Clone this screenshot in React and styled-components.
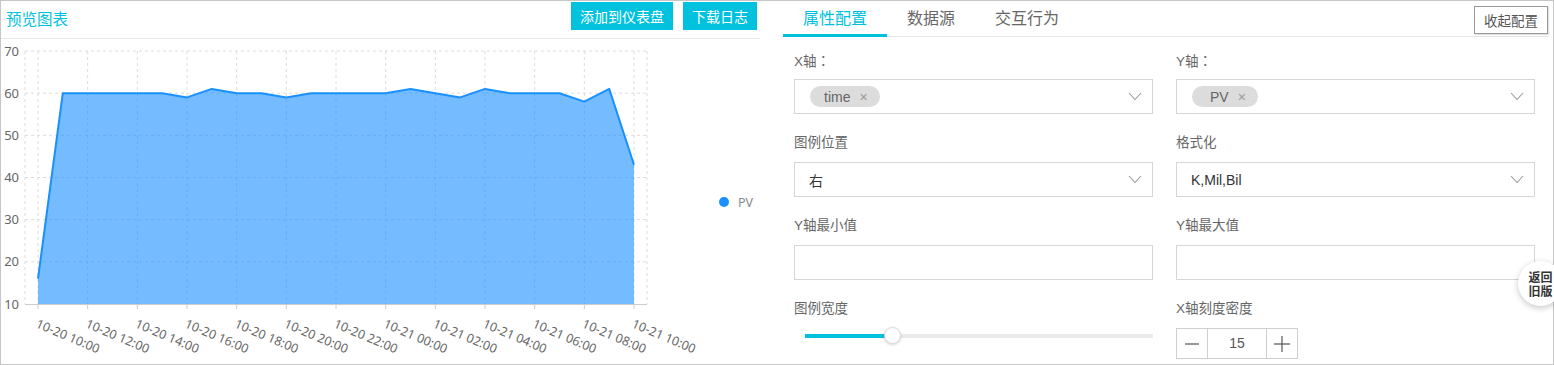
import React from 'react';
import styled, { createGlobalStyle } from 'styled-components';

const CYAN = '#00c1de';
const BLUE = '#1890ff';

const GlobalStyle = createGlobalStyle`
  html, body {
    margin: 0;
    padding: 0;
    overflow: hidden;
    background: #fff;
  }
  body {
    font-family: "Liberation Sans", "Noto Sans CJK SC", sans-serif;
  }
  * {
    box-sizing: border-box;
  }
`;

const Frame = styled.div`
  position: relative;
  display: flex;
  width: 1554px;
  height: 365px;
  border: 1px solid #c6c6c6;
`;

/* ---------- left: chart preview ---------- */

const ChartPanel = styled.section`
  display: flex;
  flex-direction: column;
  flex-shrink: 0;
  width: 759px;
`;

const ChartHeader = styled.header`
  display: flex;
  align-items: flex-start;
  gap: 10px;
  height: 38px;
  padding: 1px 3px 0 5px;
  border-bottom: 1px solid #e6e6e6;
`;

const Title = styled.h2`
  margin: 0 auto 0 0;
  font-family: "Noto Sans CJK SC", sans-serif;
  font-size: 15.5px;
  font-weight: 400;
  line-height: 32px;
  color: ${CYAN};
`;

const HeadButton = styled.button`
  height: 28px;
  padding: 0 9px;
  border: none;
  background: ${CYAN};
  color: #fff;
  font-family: "Noto Sans CJK SC", sans-serif;
  font-size: 14px;
  cursor: pointer;
`;

const ChartSvg = styled.svg`
  display: block;
  font-family: "Noto Sans", "Liberation Sans", sans-serif;

  text {
    fill: #666;
    font-size: 12.5px;
  }
`;

/* ---------- right: config ---------- */

const ConfigPanel = styled.section`
  display: flex;
  flex-direction: column;
  flex: 1;
  min-width: 0;
  margin-left: 10px;
`;

const TabBar = styled.nav`
  display: flex;
  align-items: flex-end;
  height: 36px;
  margin: 0 5px 0 13px;
  border-bottom: 1px solid #e6e6e6;
`;

const Tab = styled.div`
  height: 36px;
  margin-bottom: -1px;
  padding: 0 20px;
  font-family: "Noto Sans CJK SC", sans-serif;
  font-size: 16px;
  line-height: 33px;
  color: ${p => (p.$active ? CYAN : '#666')};
  border-bottom: 3px solid ${p => (p.$active ? CYAN : 'transparent')};
  cursor: pointer;
`;

const CollapseButton = styled.button`
  align-self: flex-start;
  height: 28px;
  margin: 5px 0 0 auto;
  padding: 0 9px;
  border: 1px solid #9a9a9a;
  background: #fff;
  box-shadow: 1px 1px 1px rgba(0, 0, 0, 0.12);
  color: #555;
  font-family: "Noto Sans CJK SC", sans-serif;
  font-size: 13.5px;
`;

const Form = styled.div`
  display: grid;
  grid-template-columns: 359px 359px;
  column-gap: 23px;
  row-gap: 19px;
  padding: 13px 0 0 24px;
`;

const Field = styled.div`
  display: flex;
  flex-direction: column;
`;

const Label = styled.div`
  height: 20px;
  margin-bottom: 9px;
  font-family: "Liberation Sans", "Noto Sans CJK SC", sans-serif;
  font-size: 13.5px;
  line-height: 20px;
  color: #666;
`;

// full-width colon drawn centred in its cell, as in the original UI font
const Colon = styled.span`
  font-family: "Noto Sans CJK TC", sans-serif;
`;

const SelectBox = styled.div`
  display: flex;
  align-items: center;
  height: 35px;
  padding: 0 10px 0 ${p => (p.$tags ? 15 : 14)}px;
  border: 1px solid #d6d6d6;
  background: #fff;
  color: #333;
  font-size: 14px;
`;

const Caret = styled.svg`
  margin-left: auto;
  flex-shrink: 0;
`;

const Tag = styled.span`
  display: inline-flex;
  align-items: center;
  gap: 9px;
  height: 21px;
  padding: 0 12px 0 ${p => p.$pad || 14}px;
  border-radius: 11px;
  background: #dcdcdc;
  color: #666;
  font-size: 14px;
`;

const TagClose = styled.span`
  color: #999;
  font-size: 14px;
  line-height: 1;
`;

const TextInput = styled.input`
  height: 35px;
  padding: 0 14px;
  border: 1px solid #d6d6d6;
  outline: none;
  font-size: 14px;
`;

const Slider = styled.div`
  position: relative;
  height: 16px;
  margin-left: 11px;
`;

const Track = styled.div`
  height: 4px;
  margin-top: 6px;
  background: #ebebeb;
`;

const TrackFill = styled.div`
  height: 100%;
  background: ${CYAN};
`;

const Thumb = styled.div`
  position: absolute;
  top: -1px;
  width: 17px;
  height: 17px;
  margin-left: -8px;
  border: 1px solid #dcdcdc;
  border-radius: 50%;
  background: #fff;
  box-shadow: 0 1px 3px rgba(0, 0, 0, 0.18);
`;

const Stepper = styled.div`
  display: flex;
  width: 122px;
  height: 31px;
  border: 1px solid #cfcfcf;
`;

const StepButton = styled.button`
  display: flex;
  align-items: center;
  justify-content: center;
  width: 30px;
  padding: 0;
  border: none;
  background: #fff;
`;

const StepValue = styled.div`
  flex: 1;
  border-left: 1px solid #cfcfcf;
  border-right: 1px solid #cfcfcf;
  color: #555;
  font-size: 14px;
  line-height: 29px;
  text-align: center;
`;

const BackBadge = styled.div`
  position: absolute;
  left: 1517px;
  top: 260px;
  display: flex;
  flex-direction: column;
  align-items: center;
  justify-content: center;
  width: 45px;
  height: 45px;
  border-radius: 50%;
  background: #fff;
  box-shadow: 0 2px 6px rgba(0, 0, 0, 0.22);
  color: #333;
  font-family: "Noto Sans CJK SC", sans-serif;
  font-size: 12px;
  font-weight: 700;
  line-height: 14px;
`;

/* ---------- chart data ---------- */

const values = [16, 60, 60, 60, 60, 60, 59, 61, 60, 60, 59, 60, 60, 60, 60, 61, 60, 59, 61, 60, 60, 60, 58, 61, 43];
const X0 = 38;
const X1 = 634;
const LEFT = 25;
const RIGHT = 647;
const Y10 = 304;
const Y70 = 51;
const px = i => X0 + (i * (X1 - X0)) / (values.length - 1);
const py = v => Y10 - ((v - 10) * (Y10 - Y70)) / 60;

const hours = ['10:00', '12:00', '14:00', '16:00', '18:00', '20:00', '22:00', '00:00', '02:00', '04:00', '06:00', '08:00', '10:00'];
const xLabels = hours.map((h, i) => `10-${i < 7 ? 20 : 21} ${h}`);

const PreviewChart = () => {
  const line = values.map((v, i) => `${i ? 'L' : 'M'}${px(i).toFixed(1)},${py(v).toFixed(1)}`).join(' ');
  const area = `${line} L${X1},${Y10} L${X0},${Y10} Z`;
  const ticks = xLabels.map((_, i) => px(i * 2));

  return (
    <ChartSvg width="759" height="325" viewBox="1 39 759 325">
      {[20, 30, 40, 50, 60, 70].map(v => (
        <line key={v} x1={LEFT} x2={RIGHT} y1={py(v)} y2={py(v)} stroke="#dcdcdc" strokeDasharray="3 3" />
      ))}
      {[LEFT, ...ticks, RIGHT].map((x, i) => (
        <line key={i} x1={x} x2={x} y1={Y70} y2={Y10} stroke="#dcdcdc" strokeDasharray="3 3" />
      ))}
      <path d={area} fill={BLUE} fillOpacity="0.6" />
      <path d={line} fill="none" stroke={BLUE} strokeWidth="2" strokeLinejoin="round" />
      <line x1={LEFT} x2={RIGHT} y1={Y10 + 0.5} y2={Y10 + 0.5} stroke="#cccccc" />
      {ticks.map((x, i) => (
        <line key={i} x1={x} x2={x} y1={Y10} y2={Y10 + 5} stroke="#cccccc" />
      ))}
      {[10, 20, 30, 40, 50, 60, 70].map(v => (
        <text key={v} x="19" y={py(v) + 4.5} textAnchor="end" style={{ fontSize: 13 }}>
          {v}
        </text>
      ))}
      {xLabels.map((label, i) => (
        <text key={i} transform={`translate(${ticks[i] - 3}, 327) rotate(23)`}>
          {label}
        </text>
      ))}
      <circle cx="724" cy="202" r="5" fill={BLUE} />
      <text x="738" y="207" style={{ fill: '#888' }}>PV</text>
    </ChartSvg>
  );
};

const ChevronDown = () => (
  <Caret width="14" height="9" viewBox="0 0 14 9">
    <polyline points="1,1 7,7.5 13,1" fill="none" stroke="#999" strokeWidth="1.1" />
  </Caret>
);

const App = () => (
  <>
    <GlobalStyle />
    <Frame>
      <ChartPanel>
        <ChartHeader>
          <Title>预览图表</Title>
          <HeadButton>添加到仪表盘</HeadButton>
          <HeadButton>下载日志</HeadButton>
        </ChartHeader>
        <PreviewChart />
      </ChartPanel>

      <ConfigPanel>
        <TabBar>
          <Tab $active>属性配置</Tab>
          <Tab>数据源</Tab>
          <Tab>交互行为</Tab>
          <CollapseButton>收起配置</CollapseButton>
        </TabBar>

        <Form>
          <Field>
            <Label>X轴<Colon>：</Colon></Label>
            <SelectBox $tags>
              <Tag>time<TagClose>×</TagClose></Tag>
              <ChevronDown />
            </SelectBox>
          </Field>
          <Field>
            <Label>Y轴<Colon>：</Colon></Label>
            <SelectBox $tags>
              <Tag $pad={18}>PV<TagClose>×</TagClose></Tag>
              <ChevronDown />
            </SelectBox>
          </Field>
          <Field>
            <Label>图例位置</Label>
            <SelectBox>
              右
              <ChevronDown />
            </SelectBox>
          </Field>
          <Field>
            <Label>格式化</Label>
            <SelectBox>
              K,Mil,Bil
              <ChevronDown />
            </SelectBox>
          </Field>
          <Field>
            <Label>Y轴最小值</Label>
            <TextInput />
          </Field>
          <Field>
            <Label>Y轴最大值</Label>
            <TextInput />
          </Field>
          <Field>
            <Label>图例宽度</Label>
            <Slider>
              <Track>
                <TrackFill style={{ width: '25%' }} />
              </Track>
              <Thumb style={{ left: '25%' }} />
            </Slider>
          </Field>
          <Field>
            <Label>X轴刻度密度</Label>
            <Stepper>
              <StepButton>
                <svg width="14" height="14" viewBox="0 0 14 14">
                  <line x1="0" y1="7" x2="14" y2="7" stroke="#555" strokeWidth="1.2" />
                </svg>
              </StepButton>
              <StepValue>15</StepValue>
              <StepButton>
                <svg width="16" height="16" viewBox="0 0 16 16">
                  <line x1="0" y1="8" x2="16" y2="8" stroke="#555" strokeWidth="1.2" />
                  <line x1="8" y1="0" x2="8" y2="16" stroke="#555" strokeWidth="1.2" />
                </svg>
              </StepButton>
            </Stepper>
          </Field>
        </Form>
      </ConfigPanel>

      <BackBadge>
        <span>返回</span>
        <span>旧版</span>
      </BackBadge>
    </Frame>
  </>
);

export default App;
